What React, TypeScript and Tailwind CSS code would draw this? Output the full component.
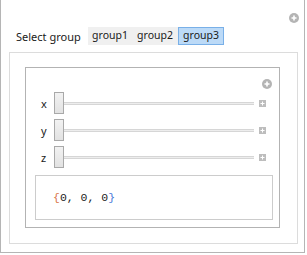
const PlusCircle = ({ size }: { size: number }) => (
  <svg width={size} height={size} viewBox="0 0 10 10">
    <circle cx="5" cy="5" r="5" fill="#b4b4b4" />
    <path d="M5 2.5v5M2.5 5h5" stroke="#fff" strokeWidth="1.6" />
  </svg>
);

const PlusBox = () => (
  <svg width="7" height="7" viewBox="0 0 7 7">
    <rect width="7" height="7" fill="#bdbdbd" />
    <path d="M3.5 1.5v4M1.5 3.5h4" stroke="#fff" strokeWidth="1" />
  </svg>
);

const groups = [
  { name: 'group1', w: 'w-[44px]' },
  { name: 'group2', w: 'w-[46px]' },
  { name: 'group3', w: 'w-[46px]' },
];
const vars = ['x', 'y', 'z'];

export default function App() {
  const selected = 'group3';

  return (
    <div className="w-[307px] h-[255px] bg-white font-['Noto_Sans',sans-serif] text-[11px] text-[#1a1a1a]">
      <div className="relative w-[305px] h-[253px] border-x border-b border-[#b5b5b5] pt-[27px]">
        <div className="absolute top-[13px] right-[5px]">
          <PlusCircle size={10} />
        </div>

        {/* group selector */}
        <div className="flex items-center h-[18px] pl-[15px]">
          <span className="w-[72px] leading-none">Select group</span>
          <div className="flex h-[18px] bg-[#f0f0f0] text-[10.5px]">
            {groups.map((g) => (
              <div
                key={g.name}
                className={
                  g.name === selected
                    ? `${g.w} flex items-center justify-center border border-[#79b0e8] bg-[#bcdaf7]`
                    : `${g.w} flex items-center justify-center`
                }
              >
                {g.name}
              </div>
            ))}
          </div>
        </div>

        <div className="ml-[8px] mt-[7px] w-[289px] h-[192px] border border-[#dcdcdc] pl-[15px] pt-[14px]">
          <div className="relative w-[255px] h-[161px] border border-[#b3b3b3] pt-[24px] pl-[15px]">
            <div className="absolute top-[11px] right-[7px]">
              <PlusCircle size={10} />
            </div>

            {/* sliders */}
            <div className="flex flex-col gap-[5px]">
              {vars.map((v) => (
                <div key={v} className="flex items-center h-[22px]">
                  <span className="w-[13px] leading-none">{v}</span>
                  <div className="relative w-[200px] h-[22px] flex items-center">
                    <div className="w-full h-[3px] bg-[#ededed] border-y border-[#d6d6d6]" />
                    <div className="absolute left-0 top-0 w-[10px] h-[22px] border border-[#a9a9a9] bg-gradient-to-b from-[#f2f2f2] to-[#e2e2e2]" />
                  </div>
                  <div className="ml-[5px]">
                    <PlusBox />
                  </div>
                </div>
              ))}
            </div>

            {/* output */}
            <div className="ml-[-6px] mt-[7px] w-[238px] h-[45px] border border-[#cccccc] flex items-center pl-[17px] font-['Liberation_Mono',monospace] text-[11.5px] text-[#222]">
              <span className="text-[#d9764a]">{'{'}</span>
              <span>0, 0, 0</span>
              <span className="text-[#4a7ad9]">{'}'}</span>
            </div>
          </div>
        </div>
      </div>
    </div>
  );
}
